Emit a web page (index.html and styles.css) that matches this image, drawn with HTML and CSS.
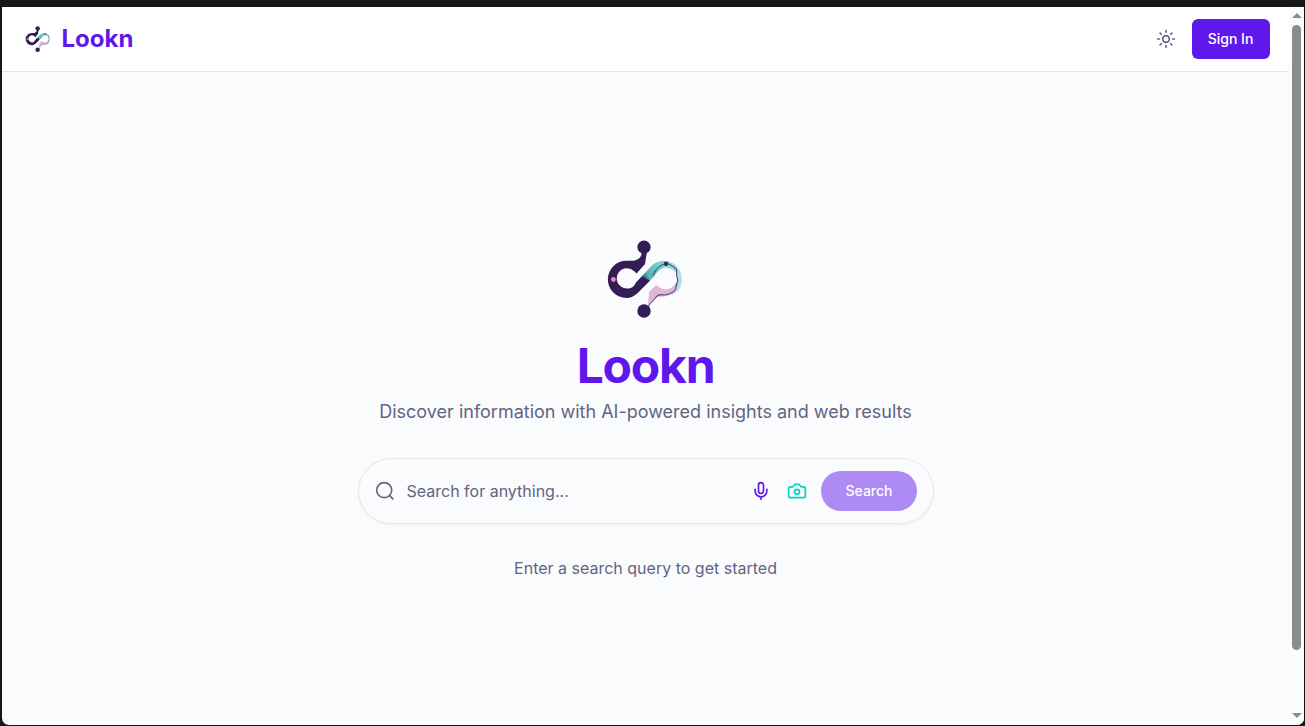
FILE: index.html
```html
<!DOCTYPE html>
<html lang="en">
<head>
<meta charset="utf-8">
<title>Lookn</title>
<link rel="stylesheet" href="styles.css">
</head>
<body>
<svg class="defs" width="0" height="0">
  <defs>
    <linearGradient id="band" gradientUnits="userSpaceOnUse" x1="41" y1="55" x2="82" y2="36">
      <stop offset="0" stop-color="#341d54"/>
      <stop offset=".1" stop-color="#343b69"/>
      <stop offset=".26" stop-color="#56b3b5"/>
      <stop offset=".6" stop-color="#79d3ce"/>
      <stop offset="1" stop-color="#a9dde3"/>
    </linearGradient>
    <symbol id="logo" viewBox="-3 -1.5 96 96">
      <path fill="#b3e0e5" d="M66 28.500C75 30 82 38 82 46.500C82 54 78 60 71 63L73 58C78 53 79 42 73 36Z"/>
      <path fill="#dfb7d5" d="M56 52.500L49 59.500L48 73L56 64Q68 65 75 60L78 53L76 50Q72 57 65 57Q60 56 56 52.500Z"/>
      <path fill="url(#band)" d="M37 61L54 44Q59 36 65 35Q72 35 77 41L80 39Q75 29 64 28.300Q56 28.500 51 34L36 50L31 59Z"/>
      <path fill="#341d54" d="M41.500 19H47L45 31.500L36.500 41L34 38.500A10.200 10.200 0 1 0 35.500 51.500L42 44L50 48L37 61Q32 65.500 26.500 65.500A18.600 18.600 0 0 1 26.500 28.200H34Q40 27 41.500 22Z"/>
      <path fill="none" stroke="#5b4a80" stroke-width="1.100" stroke-linejoin="round" d="M53 43Q57 33 66 31Q71 31.500 76.500 37Q76 42 77.800 48Q76.500 52 75.500 57Q71 62 64 62.500Q58 61 55 66L46 76"/>
      <circle cx="44" cy="14.700" r="6.600" fill="#341d54"/>
      <circle cx="44" cy="78.500" r="6.700" fill="#341d54"/>
      <circle cx="66" cy="31.200" r="2.200" fill="#37265f"/>
      <circle cx="13.400" cy="47" r="2.400" fill="#ee85b5"/>
    </symbol>
  </defs>
</svg>
<div class="window">
  <div class="page">
    <header class="header">
      <div class="brand">
        <svg class="brand-logo"><use href="#logo"/></svg>
        <span class="brand-name">Lookn</span>
      </div>
      <div class="actions">
        <svg class="icon theme" viewBox="0 0 24 24"><circle cx="12" cy="12" r="4"/><path d="M12 2v2M12 20v2M4.930 4.930l1.410 1.410M17.660 17.660l1.410 1.410M2 12h2M20 12h2M6.340 17.660l-1.410 1.410M19.070 4.930l-1.410 1.410"/></svg>
        <button class="sign-in">Sign In</button>
      </div>
    </header>
    <main class="hero">
      <svg class="hero-logo"><use href="#logo"/></svg>
      <h1 class="title">Lookn</h1>
      <p class="tagline">Discover information with AI-powered insights and web results</p>
      <div class="search">
        <svg class="icon magnifier" viewBox="0 0 24 24"><circle cx="11" cy="11" r="9"/><path d="M21.500 21.500l-4-4"/></svg>
        <span class="placeholder">Search for anything...</span>
        <svg class="icon mic" viewBox="0 0 24 24"><path d="M12 2a3 3 0 0 0-3 3v7a3 3 0 0 0 6 0V5a3 3 0 0 0-3-3ZM19 10v2a7 7 0 0 1-14 0v-2M12 19v3"/></svg>
        <svg class="icon camera" viewBox="0 0 24 24"><path d="M14.500 4h-5L7 7H4a2 2 0 0 0-2 2v9a2 2 0 0 0 2 2h16a2 2 0 0 0 2-2V9a2 2 0 0 0-2-2h-3l-2.500-3Z"/><circle cx="12" cy="13" r="3"/></svg>
        <button class="submit">Search</button>
      </div>
      <p class="hint">Enter a search query to get started</p>
    </main>
  </div>
  <div class="scrollbar">
    <svg class="arrow" viewBox="0 0 10 5"><path d="M0 5L5 0L10 5Z"/></svg>
    <div class="thumb"></div>
    <svg class="arrow arrow-down" viewBox="0 0 10 5"><path d="M0 0L5 5L10 0Z"/></svg>
  </div>
</div>
</body>
</html>
```
FILE: styles.css
```css
* { box-sizing: border-box; }
body {
  margin: 0;
  height: 726px;
  padding: 7px 1px 1px 2px;
  overflow: hidden;
  background: #171717;
  font-family: Inter, sans-serif;
  color: #626482;
}
.defs { position: absolute; }
.window {
  display: flex;
  height: 718px;
  overflow: hidden;
  background: #fafbfd;
  border-radius: 0 0 7px 7px;
}
.page { flex: 1; }
.header {
  display: flex;
  align-items: center;
  justify-content: space-between;
  height: 65px;
  padding: 0 19px 0 19.5px;
  background: #fff;
  border-bottom: 1px solid #e4e5e9;
}
.brand { display: flex; align-items: center; gap: 8px; }
.brand-logo { width: 32px; height: 32px; }
.brand-name { font-size: 24px; line-height: 32px; font-weight: 700; color: #5f17eb; }
.actions { display: flex; align-items: center; gap: 16px; }
.icon {
  flex: none;
  width: 20px;
  height: 20px;
  fill: none;
  stroke: currentColor;
  stroke-width: 2;
  stroke-linecap: round;
  stroke-linejoin: round;
}
button {
  padding: 0;
  border: 0;
  height: 40px;
  color: #fff;
  font: 500 14px/20px Inter, sans-serif;
}
.sign-in { width: 78px; padding-right: 1px; border-radius: 6px; background: #5f17eb; }
.hero {
  display: flex;
  flex-direction: column;
  align-items: center;
  padding-top: 158.5px;
}
.hero-logo { width: 96px; height: 96px; margin-right: 1px; }
.title {
  margin: 15.5px 0 0;
  font-size: 48px;
  line-height: 48px;
  font-weight: 700;
  letter-spacing: -1.2px;
  color: #5f17eb;
}
.tagline { margin: 8px 0 32px; font-size: 18px; line-height: 28px; }
.search {
  display: flex;
  align-items: center;
  width: 576px;
  height: 66px;
  padding: 0 16px;
  border: 1px solid #e4e5e9;
  border-radius: 33px;
  box-shadow: 0 1px 2px rgba(0, 0, 0, .05);
}
.placeholder { flex: 1; margin-left: 12px; font-size: 16px; line-height: 24px; }
.mic { margin-right: 16px; color: #5f17eb; }
.camera { margin-right: 14px; color: #00d4c4; }
.submit { width: 96px; padding-left: 1px; border-radius: 20px; background: #ae8af5; }
.hint { margin: 32px 0 0; font-size: 16px; line-height: 24px; }
.scrollbar {
  display: flex;
  flex-direction: column;
  align-items: center;
  width: 15px;
  padding: 6px 1px 7px 1px;
  background: #fcfcfc;
}
.arrow { flex: none; width: 10px; height: 5px; fill: #8b8b8b; }
.arrow-down { margin-top: auto; }
.thumb { width: 9px; height: 625px; margin-top: 7px; border-radius: 5px; background: #8b8b8b; }
```
